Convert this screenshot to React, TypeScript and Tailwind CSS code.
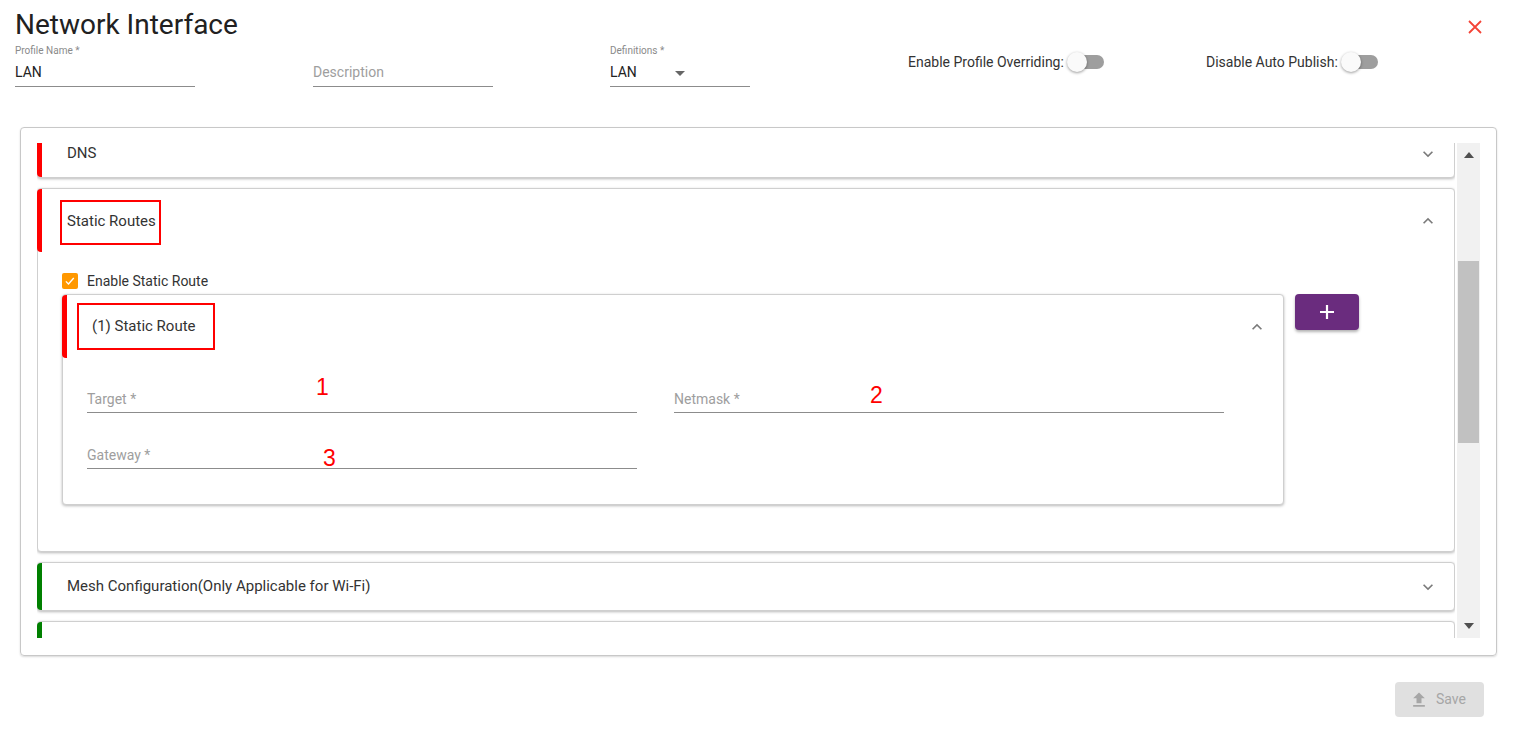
import clsx from "clsx";

function Chevron({ up }: { up?: boolean }) {
  return (
    <svg
      viewBox="0 0 24 24"
      className={clsx("h-5 w-5 fill-[#7a7a7a]", { "rotate-180": up })}
    >
      <path d="M16.59 8.59L12 13.17 7.41 8.59 6 10l6 6 6-6z" />
    </svg>
  );
}

function Toggle({ label }: { label: string }) {
  return (
    <div className="mt-[7px] flex h-[20px] items-center text-[14px] text-[#333]">
      <span>{label}</span>
      <span className="relative ml-[3px] inline-flex h-[20px] w-[37px] items-center">
        <span className="ml-[4px] h-[14px] w-[33px] rounded-full bg-[#9e9e9e]" />
        <span className="absolute left-0 top-0 h-[20px] w-[20px] rounded-full bg-[#fafafa] shadow-[0_1px_3px_rgba(0,0,0,0.4)]" />
      </span>
    </div>
  );
}

function TextField({
  label,
  value,
  placeholder,
  width,
  select,
}: {
  label?: string;
  value?: string;
  placeholder?: string;
  width: string;
  select?: boolean;
}) {
  return (
    <div className={clsx("flex flex-col", width)}>
      <div className="h-[14px] text-[10px] leading-[12px] text-[#8a8a8a]">
        {label}
      </div>
      <div className="flex h-[28px] items-center border-b border-[#8c8c8c] text-[14px]">
        {value ? (
          <span className="text-[#222]">{value}</span>
        ) : (
          <span className="text-[#9e9e9e]">{placeholder}</span>
        )}
        {select ? (
          <svg viewBox="0 0 24 24" className="ml-[31px] h-6 w-6 fill-[#666]">
            <path d="M7 10l5 5 5-5z" />
          </svg>
        ) : undefined}
      </div>
    </div>
  );
}

function Panel({
  title,
  color,
  expanded,
  annotated,
  children,
  className,
}: {
  title?: string;
  color: string;
  expanded?: boolean;
  annotated?: string;
  children?: React.ReactNode;
  className?: string;
}) {
  return (
    <div
      className={clsx(
        "flex-none rounded-[4px] border border-[#cfcfcf] bg-white shadow-[0_1px_3px_rgba(0,0,0,0.28)]",
        className,
      )}
    >
      <div
        className={clsx("flex items-center", {
          "h-[47px]": !expanded,
          "h-[63px]": expanded,
        })}
      >
        <div className={clsx("-ml-px w-[5px] self-stretch rounded-l-[4px]", color)} />
        {annotated ? (
          <div className={clsx("flex items-center border-2 border-[#f00] text-[15px] text-[#333]", annotated)}>
            {title}
          </div>
        ) : (
          <div className="ml-[25px] text-[15px] text-[#333]">{title}</div>
        )}
        <div className="ml-auto pr-[16px]">
          <Chevron up={expanded} />
        </div>
      </div>
      {children}
    </div>
  );
}

function RouteField({ label }: { label: string }) {
  return (
    <div className="flex h-[31px] w-[550px] items-end border-b border-[#8c8c8c] pb-[3px] text-[14px] leading-[20px] text-[#9e9e9e]">
      {label}
    </div>
  );
}

export default function App() {
  return (
    <div className="min-h-[732px] bg-white font-['Roboto',sans-serif]">
      {/* title row */}
      <div className="flex items-start pl-[15px] pr-[37px] pt-[10px]">
        <h1 className="text-[28px] leading-[30px] text-[#212121]">
          Network Interface
        </h1>
        <button className="ml-auto mt-[10px]">
          <svg viewBox="0 0 14 14" className="h-[14px] w-[14px] stroke-[#f44336]" strokeWidth="1.8">
            <path d="M1 1l12 12M13 1L1 13" />
          </svg>
        </button>
      </div>

      {/* form fields */}
      <div className="mt-[5px] flex pl-[15px]">
        <div className="w-[298px] flex-none">
          <TextField label="Profile Name *" value="LAN" width="w-[180px]" />
        </div>
        <div className="w-[297px] flex-none">
          <TextField label="" placeholder="Description" width="w-[180px]" />
        </div>
        <div className="w-[298px] flex-none">
          <TextField label="Definitions *" value="LAN" width="w-[140px]" select />
        </div>
        <div className="w-[298px] flex-none">
          <Toggle label="Enable Profile Overriding:" />
        </div>
        <div className="w-[298px] flex-none">
          <Toggle label="Disable Auto Publish:" />
        </div>
      </div>

      {/* card */}
      <div className="ml-[20px] mr-[22px] mt-[40px] rounded-[4px] border border-[#c8c8c8] px-[16px] pb-[17px] pt-[15px] shadow-[0_1px_2px_rgba(0,0,0,0.15)]">
        <div className="flex h-[495px] gap-[2px]">
          <div className="w-[1418px] flex-none overflow-hidden pb-[4px]">
            <div className="-mt-[14px] flex flex-col gap-[10px]">
              <Panel title="DNS" color="bg-[#f00]" />

              <Panel
                title="Static Routes"
                color="bg-[#f00]"
                expanded
                annotated="ml-[18px] mt-[4px] h-[45px] w-[101px] pb-[3px] pl-[5px]"
              >
                <div className="pb-[46px] pl-[24px] pt-[21px]">
                  <div className="flex h-4 items-center gap-[9px] text-[14px] text-[#333]">
                    <span className="flex h-4 w-4 items-center justify-center rounded-[2px] bg-[#ff9800]">
                      <svg viewBox="0 0 16 16" className="h-3 w-3 fill-none stroke-white" strokeWidth="1.8">
                        <path d="M2.5 8.5l3.5 3.5 7-8" />
                      </svg>
                    </span>
                    <span>Enable Static Route</span>
                  </div>
                  <div className="mt-[5px] flex items-start gap-[11px]">
                    <Panel
                      title="(1) Static Route"
                      color="bg-[#f00]"
                      expanded
                      annotated="ml-[10px] h-[47px] w-[138px] pl-[13px]"
                      className="w-[1222px]"
                    >
                      <div className="relative pb-[35px] pl-[24px] pt-[24px]">
                        <div className="flex gap-[37px]">
                          <RouteField label="Target *" />
                          <RouteField label="Netmask *" />
                        </div>
                        <div className="mt-[25px] flex">
                          <RouteField label="Gateway *" />
                        </div>
                        <span className="absolute left-[253px] top-[18px] font-['Liberation_Sans',sans-serif] text-[23px] leading-none text-[#f00]">
                          1
                        </span>
                        <span className="absolute left-[807px] top-[26px] font-['Liberation_Sans',sans-serif] text-[23px] leading-none text-[#f00]">
                          2
                        </span>
                        <span className="absolute left-[260px] top-[89px] font-['Liberation_Sans',sans-serif] text-[23px] leading-none text-[#f00]">
                          3
                        </span>
                      </div>
                    </Panel>
                    <button className="flex h-[36px] w-[64px] items-center justify-center rounded-[4px] bg-[#6a2c7e] shadow-[0_2px_3px_rgba(0,0,0,0.3)]">
                      <svg viewBox="0 0 16 16" className="h-[16px] w-[16px] stroke-white" strokeWidth="2.2">
                        <path d="M8 1v14M1 8h14" />
                      </svg>
                    </button>
                  </div>
                </div>
              </Panel>

              <Panel
                title="Mesh Configuration(Only Applicable for Wi-Fi)"
                color="bg-[#008000]"
              />
              <Panel title="" color="bg-[#008000]" />
            </div>
          </div>

          {/* scrollbar */}
          <div className="flex w-[23px] flex-none flex-col bg-[#f1f1f1]">
            <div className="flex h-[24px] items-center justify-center">
              <svg viewBox="0 0 10 6" className="h-[6px] w-[10px] fill-[#505050]">
                <path d="M0 6L5 0l5 6z" />
              </svg>
            </div>
            <div className="h-[94px]" />
            <div className="mx-[1px] h-[182px] bg-[#c1c1c1]" />
            <div className="grow" />
            <div className="flex h-[24px] items-center justify-center">
              <svg viewBox="0 0 10 6" className="h-[6px] w-[10px] fill-[#505050]">
                <path d="M0 0l5 6 5-6z" />
              </svg>
            </div>
          </div>
        </div>
      </div>

      {/* footer */}
      <div className="mt-[26px] flex justify-end pr-[35px]">
        <button className="flex h-[35px] w-[89px] items-center justify-center gap-[7px] rounded-[4px] bg-[#e0e0e0] pr-[4px] text-[14px] text-[#a6a6a6]">
          <svg viewBox="0 0 24 24" className="h-[20px] w-[20px] fill-[#a6a6a6]">
            <path d="M5 20h14v-2H5v2zm0-10h4v6h6v-6h4l-7-7-7 7z" />
          </svg>
          Save
        </button>
      </div>
    </div>
  );
}
